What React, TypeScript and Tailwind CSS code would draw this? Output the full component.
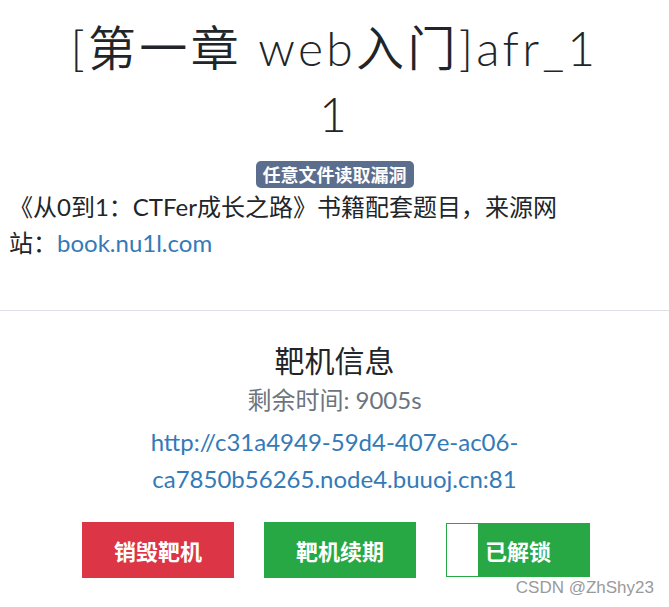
import React from "react";

export default function App() {
  return (
    <div className="relative w-[669px] h-[607px] overflow-hidden bg-white text-[#212529] font-['Lato','Noto_Sans_CJK_SC',sans-serif]">
      <div className="pt-[15px] text-center">
        <h1 className="text-[48px] leading-[66px] font-[350] tracking-[3.3px] font-['Lato','Noto_Sans_CJK_SC',sans-serif]">
          <span className="font-light">[</span>第一章 <span className="font-light">web</span>入门<span className="font-light">]afr_1</span>
          <br />
          <span className="font-light">1</span>
        </h1>
      </div>
      <div className="mt-[14px] flex justify-center">
        <span className="inline-block rounded-[5px] bg-[#5b6e8e] px-[7px] text-[18px] leading-[27px] font-bold text-white font-['Noto_Sans_CJK_SC',sans-serif]">
          任意文件读取漏洞
        </span>
      </div>
      <p className="mt-px w-[575px] pl-[9px] text-[24px] leading-[36px]">
        《从0到1：CTFer成长之路》书籍配套题目，来源网站：
        <a className="text-[#337ab7]">book.nu1l.com</a>
      </p>
      <div className="mt-[49px] h-px bg-[#dee2e6]" />
      <div className="pt-[28px] text-center">
        <h3 className="text-[30px] leading-[43px]">靶机信息</h3>
        <p className="text-[24px] leading-[36px] text-[#6c757d]">剩余时间: 9005s</p>
        <p className="mt-[5px] text-[24px] leading-[37px] text-[#337ab7]">
          http://c31a4949-59d4-407e-ac06-
          <br />
          ca7850b56265.node4.buuoj.cn:81
        </p>
      </div>
      <div className="mt-[25px] flex justify-center items-center gap-[30px] pl-[3px]">
        <button className="w-[152px] h-[56px] bg-[#dc3545] text-white text-[22px] font-bold font-['Noto_Sans_CJK_SC',sans-serif]">
          销毁靶机
        </button>
        <button className="w-[152px] h-[56px] bg-[#28a745] text-white text-[22px] font-bold font-['Noto_Sans_CJK_SC',sans-serif]">
          靶机续期
        </button>
        <button className="w-[144px] h-[54px] border border-[#28a745] bg-[linear-gradient(to_right,#ffffff_31px,#28a745_31px)] text-white text-[22px] font-bold font-['Noto_Sans_CJK_SC',sans-serif]">
          已解锁
        </button>
      </div>
      <div className="absolute right-[15px] bottom-[9px] text-[17px] leading-[20px] text-[#9a9a9a] font-['Liberation_Sans',sans-serif] [text-shadow:0_0_2px_#ffffff,0_0_2px_#ffffff]">
        CSDN @ZhShy23
      </div>
    </div>
  );
}
